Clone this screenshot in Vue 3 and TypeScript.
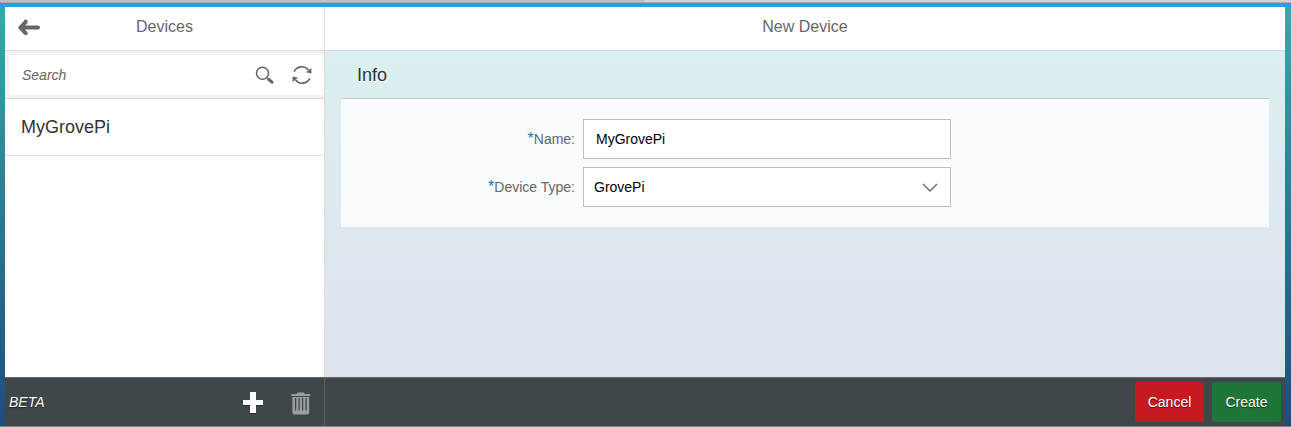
<script setup lang="ts">
import { ref } from 'vue'

const devices = ref<string[]>(['MyGrovePi'])
const query = ref('')
const name = ref('MyGrovePi')
const deviceType = ref('GrovePi')
</script>

<template>
  <div class="page">
    <div class="tabstrip"><i class="tab"></i><i class="tab active"></i></div>
    <div class="accent"></div>
    <div class="shell">
      <section class="master">
        <header class="bar">
          <svg class="back" width="22" height="18" viewBox="0 0 22 18">
            <path d="M4 8.6H20M7.6 2.6V3.2L2.4 8.6L7.6 14.2" fill="none" stroke="#666" stroke-width="4" stroke-linecap="round" stroke-linejoin="round" />
          </svg>
          <h1>Devices</h1>
        </header>
        <div class="search">
          <div class="field">
            <input v-model="query" placeholder="Search" />
            <svg class="glass" width="20" height="20" viewBox="0 0 20 20">
              <circle cx="7.5" cy="7.2" r="6" fill="none" stroke="#666" stroke-width="1.5" />
              <path d="M12 11.7L13.8 13.5" stroke="#666" stroke-width="1.6" />
              <path d="M13.8 13.5L17 16.2" stroke="#666" stroke-width="3" stroke-linecap="round" />
            </svg>
            <svg class="refresh" width="20" height="20" viewBox="0 0 20 20">
              <path d="M2.2 6.6A8.4 8.4 0 0 1 16.4 5M17.8 13.4A8.4 8.4 0 0 1 3.6 15" fill="none" stroke="#666" stroke-width="1.6" />
              <path d="M19.4 3V8.6L14 7.2ZM.6 17V11.4L6 12.8Z" fill="#666" />
            </svg>
          </div>
        </div>
        <ul class="list">
          <li v-for="device in devices" :key="device">{{ device }}</li>
        </ul>
        <footer class="foot">
          <span class="beta">BETA</span>
          <svg class="plus" width="22" height="23" viewBox="0 0 22 23">
            <path d="M8 1h6v8h7v5h-7v8H8v-8H1V9h7z" fill="#25292b" />
            <path d="M8 0h6v8h7v5h-7v8H8v-8H1V8h7z" fill="#fff" />
          </svg>
          <svg class="trash" width="20" height="24" viewBox="0 0 20 24">
            <path d="M6 2V1.2Q6 .5 6.8 .5H12.7Q13.5 .5 13.5 1.2V2H19.3V4H.3V2Z" fill="#9c9fa0" />
            <path d="M1.4 5H18.2V20.2Q18.2 22.4 16 22.4H3.6Q1.4 22.4 1.4 20.2Z" fill="#9c9fa0" />
            <path d="M4.6 6V18.4M8.1 6V18.4M11.6 6V18.4M15.1 6V18.4" stroke="#3f474a" stroke-width="1.3" />
          </svg>
        </footer>
      </section>

      <section class="detail">
        <header class="bar"><h1>New Device</h1></header>
        <main>
          <h2>Info</h2>
          <form class="panel" @submit.prevent>
            <label for="name"><b>*</b>Name:</label>
            <input id="name" v-model="name" class="control" />
            <label><b>*</b>Device Type:</label>
            <div class="control select">
              <span>{{ deviceType }}</span>
              <svg width="16" height="10" viewBox="0 0 16 10">
                <path d="M1 1L8 8L15 1" fill="none" stroke="#666" stroke-width="1.3" />
              </svg>
            </div>
          </form>
        </main>
        <footer class="foot actions">
          <button class="cancel">Cancel</button>
          <button class="create">Create</button>
        </footer>
      </section>
    </div>
    <div class="base"></div>
  </div>
</template>

<style>
body { margin: 0; overflow: hidden; }
</style>

<style scoped>
* { box-sizing: border-box; }
.page {
  width: 1291px; height: 427px; display: flex; flex-direction: column;
  font-family: "Liberation Sans", Arial, sans-serif; font-size: 14px;
  background: linear-gradient(#3fa5a9 7px, #226186 330px, #1e4c7c 427px);
}
.tabstrip { height: 3px; display: flex; background: #d3d3d3; border-bottom: 1px solid #a9a9a9; }
.tab { width: 644px; background: #bfbfbf; border-right: 1px solid #a9a9a9; }
.tab.active { flex: 1; background: #d3d3d3; border: 0; }
.accent { height: 4px; background: #279fdc; }
.shell { height: 419px; margin: 0 6px 0 5px; display: flex; }
.base { height: 1px; background: #858585; }
.master { width: 320px; display: flex; flex-direction: column; background: #fff; border-right: 1px solid #d9d9d9; }
.detail { flex: 1; display: flex; flex-direction: column; }
.bar { height: 44px; flex: none; display: flex; background: #fff; border-bottom: 1px solid #d9d9d9; }
.bar h1 {
  flex: 1; margin: 0; text-align: center; color: #666;
  font-size: 16px; font-weight: 400; line-height: 39px;
}
.master .bar h1 { padding-right: 35px; }
.back { margin: 12px 0 0 13px; flex: none; }
.search { height: 48px; flex: none; padding: 4px 0 3px 4px; background: #f2f2f2; border-bottom: 1px solid #d9d9d9; }
.field { height: 40px; display: flex; align-items: center; background: #fff; padding: 0 12px 0 13px; }
.field input {
  flex: 1; min-width: 0; padding: 0; border: 0; outline: 0; background: none;
  font: italic 14px "Liberation Sans", Arial, sans-serif; color: #666;
}
.field input::placeholder { color: #666; opacity: 1; }
.glass { margin: 2px 17px 0 0; }
.list { flex: 1; margin: 0; padding: 0; list-style: none; }
.list li {
  height: 57px; padding-left: 16px; border-bottom: 1px solid #e0e0e0;
  color: #333; font-size: 18px; line-height: 56px;
}
.foot {
  height: 49px; flex: none; display: flex; align-items: center;
  background: #3f474a; border-top: 1px solid #656b6e;
}
.master .foot { margin-right: -1px; border-right: 1px solid #555d61; }
.beta { width: 237px; padding-left: 4px; color: #fff; font-style: italic; text-shadow: 0 1px 1px rgba(0, 0, 0, .6); }
.plus { margin-top: 3px; margin-right: 27px; }
.trash { margin-top: 3px; }
main {
  flex: 1; padding: 0 16px;
  background: linear-gradient(#dceff1, #dde3eb);
}
h2 {
  height: 47px; margin: 0; padding-left: 16px; color: #333;
  font-size: 18px; font-weight: 400; line-height: 48px; text-shadow: 0 1px 0 #fff;
}
.panel {
  height: 129px; padding-top: 20px; display: grid;
  grid-template: 40px 40px / 234px 368px; gap: 8px;
  border-top: 1px solid #c6c8c9; background: rgba(255, 255, 255, .8);
}
label { color: #666; text-align: right; line-height: 40px; white-space: nowrap; }
label b { color: #007cc0; font-size: 16px; font-weight: 400; line-height: 1; }
.control {
  width: 368px; height: 40px; padding: 0 12px; border: 1px solid #bfbfbf; border-radius: 0;
  background: #fff; color: #000; font: 14px "Liberation Sans", Arial, sans-serif; outline: 0;
}
.select { display: flex; align-items: center; justify-content: space-between; padding-left: 10px; }
.select svg { margin-top: 2px; }
.actions { justify-content: flex-end; gap: 8px; padding-right: 4px; }
button {
  width: 69px; height: 40px; padding: 0; border: 0; border-radius: 2px;
  color: #fff; font: 14px "Liberation Sans", Arial, sans-serif; text-shadow: 0 1px 1px rgba(0, 0, 0, .6);
}
.cancel { background: #c61a23; }
.create { background: #1e7538; }
</style>
